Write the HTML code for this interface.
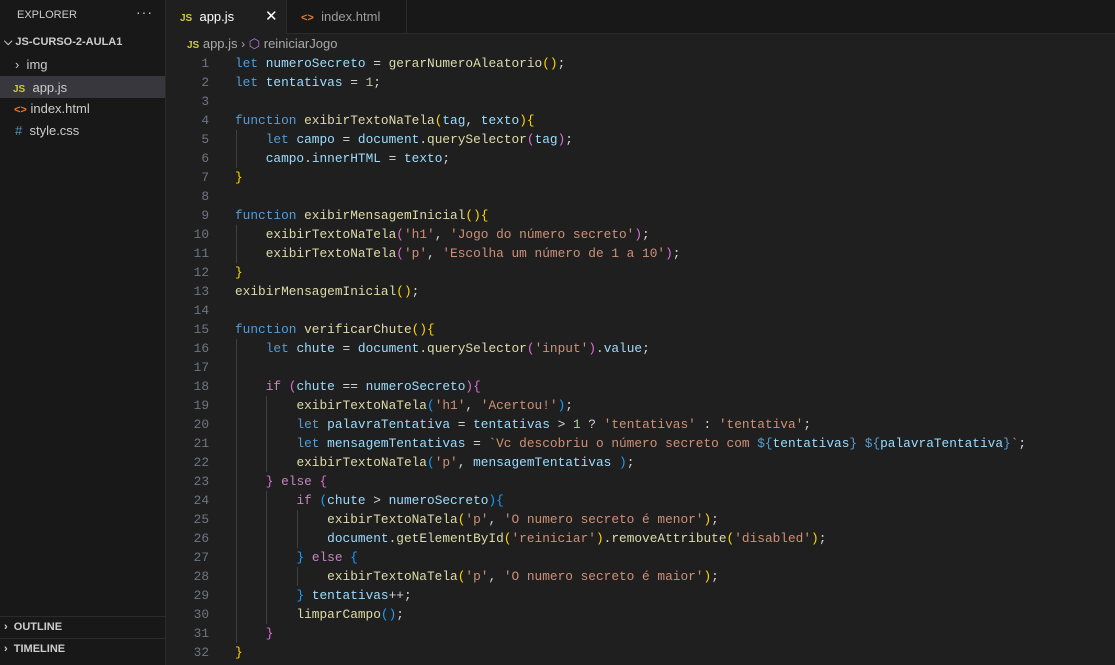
<!DOCTYPE html>
<html><head><meta charset="utf-8"><style>
*{margin:0;padding:0;box-sizing:border-box}
body{width:1115px;height:665px;background:#1f1f1f;overflow:hidden;font-family:"Liberation Sans",sans-serif;color:#cccccc;position:relative}
#side{position:absolute;left:0;top:0;width:166px;height:665px;background:#181818;border-right:1px solid #2b2b2b}
.sl{position:absolute;font-size:13px;white-space:nowrap}
#tabs{position:absolute;left:166px;top:0;width:949px;height:34px;background:#181818;border-bottom:1px solid #2b2b2b}
.tab{position:absolute;top:0;height:34px;font-size:13px;line-height:34px;white-space:nowrap}
#code{position:absolute;left:166px;top:54px;width:949px;font-family:"Liberation Mono",monospace;font-size:12.8px}
.ln{position:relative;height:19px;line-height:19px;white-space:pre}
.num{position:absolute;left:0;width:43px;text-align:right;color:#6e7681}
.tx{position:absolute;left:69px;color:#d4d4d4}
.g{position:absolute;top:0;width:1px;height:19px;background:#404040}
.k{color:#569cd6}.c{color:#c586c0}.f{color:#dcdcaa}.v{color:#9cdcfe}.s{color:#ce9178}.n{color:#b5cea8}
.y{color:#ffd700}.p{color:#da70d6}.b{color:#179fff}
.js{color:#cbcb41;font-weight:bold;font-size:10px}
</style></head><body>
<div id="side">
<div class="sl" style="left:17px;top:9px;font-size:11px">EXPLORER</div>
<div class="sl" style="left:136px;top:4px;font-size:14px;letter-spacing:1px">···</div>
<div class="sl" style="left:4px;top:36px;font-size:11px;font-weight:bold">⌵ JS-CURSO-2-AULA1</div>
<div class="sl" style="left:15px;top:57px">›&nbsp; img</div>
<div style="position:absolute;left:0;top:76px;width:165px;height:22px;background:#37373d"></div>
<div class="sl" style="left:13px;top:80px"><span class="js">JS</span>&nbsp; app.js</div>
<div class="sl" style="left:14px;top:101px"><span style="color:#e37933;font-size:11px;font-weight:bold">&lt;&gt;</span> index.html</div>
<div class="sl" style="left:15px;top:123px"><span style="color:#519aba">#</span>&nbsp; style.css</div>
<div style="position:absolute;left:0;top:616px;width:165px;border-top:1px solid #2b2b2b"></div>
<div class="sl" style="left:4px;top:621px;font-size:11px;font-weight:bold">›&nbsp; OUTLINE</div>
<div style="position:absolute;left:0;top:638px;width:165px;border-top:1px solid #2b2b2b"></div>
<div class="sl" style="left:4px;top:643px;font-size:11px;font-weight:bold">›&nbsp; TIMELINE</div>
</div>
<div id="tabs">
<div class="tab" style="left:0;width:120px;background:#1f1f1f;color:#fff;padding-left:14px"><span class="js">JS</span>&nbsp; app.js<span style="position:absolute;left:99px;font-size:15px">✕</span></div>
<div class="tab" style="left:120px;width:121px;border-right:1px solid #2b2b2b;border-left:1px solid #2b2b2b;padding-left:14px;color:#9d9d9d"><span style="color:#e37933;font-size:11px;font-weight:bold">&lt;&gt;</span>&nbsp; index.html</div>
</div>
<div style="position:absolute;left:187px;top:36px;font-size:13px;color:#a9a9a9;white-space:nowrap"><span class="js">JS</span> app.js <span style="font-size:12px">›</span> <span style="color:#b180d7">⬡</span> reiniciarJogo</div>
<div id="code">
<div class="ln"><span class="num">1</span><span class="tx"><span class="k">let</span> <span class="v">numeroSecreto</span> = <span class="f">gerarNumeroAleatorio</span><span class="y">()</span>;</span></div>
<div class="ln"><span class="num">2</span><span class="tx"><span class="k">let</span> <span class="v">tentativas</span> = <span class="n">1</span>;</span></div>
<div class="ln"><span class="num">3</span></div>
<div class="ln"><span class="num">4</span><span class="tx"><span class="k">function</span> <span class="f">exibirTextoNaTela</span><span class="y">(</span><span class="v">tag</span>, <span class="v">texto</span><span class="y">){</span></span></div>
<div class="ln"><span class="num">5</span><i class="g" style="left:70px"></i><span class="tx">    <span class="k">let</span> <span class="v">campo</span> = <span class="v">document</span>.<span class="f">querySelector</span><span class="p">(</span><span class="v">tag</span><span class="p">)</span>;</span></div>
<div class="ln"><span class="num">6</span><i class="g" style="left:70px"></i><span class="tx">    <span class="v">campo</span>.<span class="v">innerHTML</span> = <span class="v">texto</span>;</span></div>
<div class="ln"><span class="num">7</span><span class="tx"><span class="y">}</span></span></div>
<div class="ln"><span class="num">8</span></div>
<div class="ln"><span class="num">9</span><span class="tx"><span class="k">function</span> <span class="f">exibirMensagemInicial</span><span class="y">(){</span></span></div>
<div class="ln"><span class="num">10</span><i class="g" style="left:70px"></i><span class="tx">    <span class="f">exibirTextoNaTela</span><span class="p">(</span><span class="s">'h1'</span>, <span class="s">'Jogo do número secreto'</span><span class="p">)</span>;</span></div>
<div class="ln"><span class="num">11</span><i class="g" style="left:70px"></i><span class="tx">    <span class="f">exibirTextoNaTela</span><span class="p">(</span><span class="s">'p'</span>, <span class="s">'Escolha um número de 1 a 10'</span><span class="p">)</span>;</span></div>
<div class="ln"><span class="num">12</span><span class="tx"><span class="y">}</span></span></div>
<div class="ln"><span class="num">13</span><span class="tx"><span class="f">exibirMensagemInicial</span><span class="y">()</span>;</span></div>
<div class="ln"><span class="num">14</span></div>
<div class="ln"><span class="num">15</span><span class="tx"><span class="k">function</span> <span class="f">verificarChute</span><span class="y">(){</span></span></div>
<div class="ln"><span class="num">16</span><i class="g" style="left:70px"></i><span class="tx">    <span class="k">let</span> <span class="v">chute</span> = <span class="v">document</span>.<span class="f">querySelector</span><span class="p">(</span><span class="s">'input'</span><span class="p">)</span>.<span class="v">value</span>;</span></div>
<div class="ln"><span class="num">17</span><i class="g" style="left:70px"></i></div>
<div class="ln"><span class="num">18</span><i class="g" style="left:70px"></i><span class="tx">    <span class="c">if</span> <span class="p">(</span><span class="v">chute</span> == <span class="v">numeroSecreto</span><span class="p">){</span></span></div>
<div class="ln"><span class="num">19</span><i class="g" style="left:70px"></i><i class="g" style="left:100px"></i><span class="tx">        <span class="f">exibirTextoNaTela</span><span class="b">(</span><span class="s">'h1'</span>, <span class="s">'Acertou!'</span><span class="b">)</span>;</span></div>
<div class="ln"><span class="num">20</span><i class="g" style="left:70px"></i><i class="g" style="left:100px"></i><span class="tx">        <span class="k">let</span> <span class="v">palavraTentativa</span> = <span class="v">tentativas</span> &gt; <span class="n">1</span> ? <span class="s">'tentativas'</span> : <span class="s">'tentativa'</span>;</span></div>
<div class="ln"><span class="num">21</span><i class="g" style="left:70px"></i><i class="g" style="left:100px"></i><span class="tx">        <span class="k">let</span> <span class="v">mensagemTentativas</span> = <span class="s">`Vc descobriu o número secreto com </span><span class="k">${</span><span class="v">tentativas</span><span class="k">}</span><span class="s"> </span><span class="k">${</span><span class="v">palavraTentativa</span><span class="k">}</span><span class="s">`</span>;</span></div>
<div class="ln"><span class="num">22</span><i class="g" style="left:70px"></i><i class="g" style="left:100px"></i><span class="tx">        <span class="f">exibirTextoNaTela</span><span class="b">(</span><span class="s">'p'</span>, <span class="v">mensagemTentativas</span> <span class="b">)</span>;</span></div>
<div class="ln"><span class="num">23</span><i class="g" style="left:70px"></i><span class="tx">    <span class="p">}</span> <span class="c">else</span> <span class="p">{</span></span></div>
<div class="ln"><span class="num">24</span><i class="g" style="left:70px"></i><i class="g" style="left:100px"></i><span class="tx">        <span class="c">if</span> <span class="b">(</span><span class="v">chute</span> &gt; <span class="v">numeroSecreto</span><span class="b">){</span></span></div>
<div class="ln"><span class="num">25</span><i class="g" style="left:70px"></i><i class="g" style="left:100px"></i><i class="g" style="left:131px"></i><span class="tx">            <span class="f">exibirTextoNaTela</span><span class="y">(</span><span class="s">'p'</span>, <span class="s">'O numero secreto é menor'</span><span class="y">)</span>;</span></div>
<div class="ln"><span class="num">26</span><i class="g" style="left:70px"></i><i class="g" style="left:100px"></i><i class="g" style="left:131px"></i><span class="tx">            <span class="v">document</span>.<span class="f">getElementById</span><span class="y">(</span><span class="s">'reiniciar'</span><span class="y">)</span>.<span class="f">removeAttribute</span><span class="y">(</span><span class="s">'disabled'</span><span class="y">)</span>;</span></div>
<div class="ln"><span class="num">27</span><i class="g" style="left:70px"></i><i class="g" style="left:100px"></i><span class="tx">        <span class="b">}</span> <span class="c">else</span> <span class="b">{</span></span></div>
<div class="ln"><span class="num">28</span><i class="g" style="left:70px"></i><i class="g" style="left:100px"></i><i class="g" style="left:131px"></i><span class="tx">            <span class="f">exibirTextoNaTela</span><span class="y">(</span><span class="s">'p'</span>, <span class="s">'O numero secreto é maior'</span><span class="y">)</span>;</span></div>
<div class="ln"><span class="num">29</span><i class="g" style="left:70px"></i><i class="g" style="left:100px"></i><span class="tx">        <span class="b">}</span> <span class="v">tentativas</span>++;</span></div>
<div class="ln"><span class="num">30</span><i class="g" style="left:70px"></i><i class="g" style="left:100px"></i><span class="tx">        <span class="f">limparCampo</span><span class="b">()</span>;</span></div>
<div class="ln"><span class="num">31</span><i class="g" style="left:70px"></i><span class="tx">    <span class="p">}</span></span></div>
<div class="ln"><span class="num">32</span><span class="tx"><span class="y">}</span></span></div>
</div>
</body></html>
